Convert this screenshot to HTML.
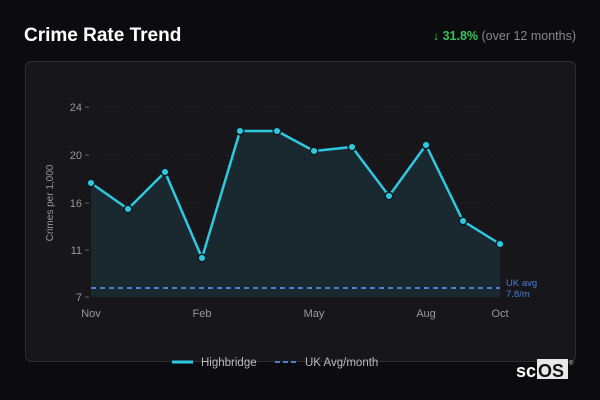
<!DOCTYPE html><html><head><style>
body{margin:0;width:600px;height:400px;background:#0c0c10;font-family:"Liberation Sans","DejaVu Sans",sans-serif;position:relative;overflow:hidden}
.t{position:absolute;left:24px;top:25px;color:#fff;font-weight:bold;font-size:19px}
.s{position:absolute;right:24px;top:29px;font-size:12.5px;color:#888}
.s b{color:#34c35a}
.p{position:absolute;left:25px;top:61px;width:549px;height:299px;border:1px solid #2c2c32;border-radius:6px;background:#16161b}
svg{position:absolute;left:0;top:0}
</style></head><body>
<div class="t">Crime Rate Trend</div>
<div class="s"><b>↓ 31.8%</b> (over 12 months)</div>
<div class="p"></div>
<svg width="600" height="400" font-family="Liberation Sans, DejaVu Sans, sans-serif">
<g stroke="#26262b" stroke-dasharray="2 3" stroke-width="1">
<line x1="91" y1="107" x2="500" y2="107"/><line x1="91" y1="155" x2="500" y2="155"/><line x1="91" y1="203" x2="500" y2="203"/><line x1="91" y1="250" x2="500" y2="250"/></g>
<g stroke="#666"><line x1="85" y1="107" x2="89" y2="107"/><line x1="85" y1="155" x2="89" y2="155"/><line x1="85" y1="203" x2="89" y2="203"/><line x1="85" y1="250" x2="89" y2="250"/><line x1="85" y1="297" x2="89" y2="297"/></g>
<g fill="#999" font-size="11" text-anchor="end"><text x="82" y="111">24</text><text x="82" y="159">20</text><text x="82" y="207">16</text><text x="82" y="254">11</text><text x="82" y="301">7</text></g>
<text transform="translate(53,203) rotate(-90)" fill="#999" font-size="10" text-anchor="middle">Crimes per 1,000</text>
<path d="M91,183 L128,209 L165,172 L202,258 L240,131 L277,131 L314,151 L352,147 L389,196 L426,145 L463,221 L500,244 L500,297 L91,297Z" fill="#19292f"/>
<line x1="91" y1="288" x2="500" y2="288" stroke="#4a7fd8" stroke-width="2" stroke-dasharray="5 4"/>
<path d="M91,183 L128,209 L165,172 L202,258 L240,131 L277,131 L314,151 L352,147 L389,196 L426,145 L463,221 L500,244" fill="none" stroke="#2ec8e0" stroke-width="2.5" stroke-linejoin="round"/>
<g fill="#2ec8e0" stroke="#0e1a20" stroke-width="1.5">
<circle cx="91" cy="183" r="3.8"/><circle cx="128" cy="209" r="3.8"/><circle cx="165" cy="172" r="3.8"/><circle cx="202" cy="258" r="3.8"/><circle cx="240" cy="131" r="3.8"/><circle cx="277" cy="131" r="3.8"/><circle cx="314" cy="151" r="3.8"/><circle cx="352" cy="147" r="3.8"/><circle cx="389" cy="196" r="3.8"/><circle cx="426" cy="145" r="3.8"/><circle cx="463" cy="221" r="3.8"/><circle cx="500" cy="244" r="3.8"/></g>
<g fill="#4a7fd8" font-size="9.5"><text x="506" y="286">UK avg</text><text x="506" y="297">7.8/m</text></g>
<g fill="#999" font-size="11" text-anchor="middle"><text x="91" y="317">Nov</text><text x="202" y="317">Feb</text><text x="314" y="317">May</text><text x="426" y="317">Aug</text><text x="500" y="317">Oct</text></g>
<line x1="172" y1="362" x2="193" y2="362" stroke="#2ec8e0" stroke-width="3"/>
<text x="201" y="366" fill="#bbb" font-size="11.5">Highbridge</text>
<line x1="275" y1="362" x2="297" y2="362" stroke="#4a7fd8" stroke-width="2" stroke-dasharray="5 3"/>
<text x="305" y="366" fill="#bbb" font-size="11.5">UK Avg/month</text>
<rect x="537" y="359" width="31" height="20" fill="#e8e8e8"/>
<text x="516" y="377" fill="#fff" font-size="18" font-weight="bold">sc</text>
<text x="538" y="377" fill="#111" font-size="18" font-weight="bold">OS</text>
<text x="569" y="365" fill="#ccc" font-size="6">®</text>
</svg>
</body></html>
